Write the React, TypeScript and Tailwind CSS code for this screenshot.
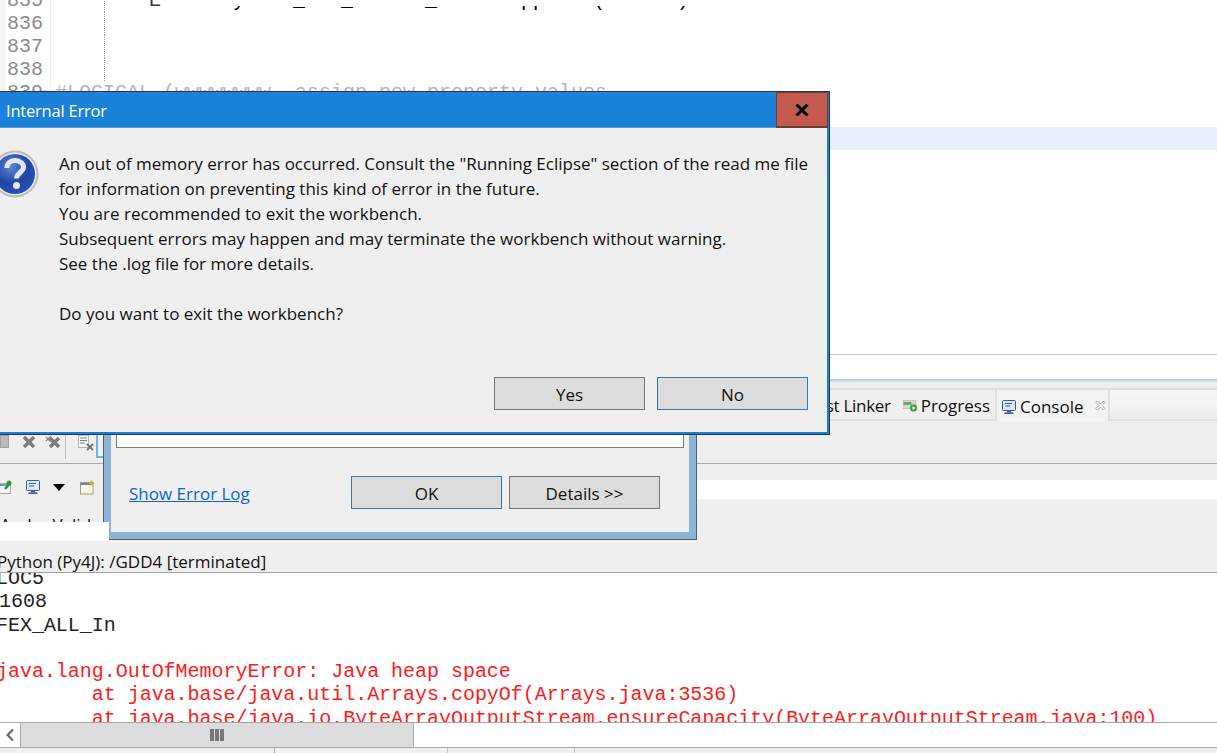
import React from "react";

const codeRows = [
  { n: "835" },
  { n: "836" },
  { n: "837" },
  { n: "838" },
  { n: "839" },
  { n: "840" },
  { n: "841" },
];

function QuestionIcon() {
  return (
    <svg width="48" height="48" viewBox="0 0 48 48">
      <defs>
        <radialGradient id="qb" cx="40%" cy="30%" r="80%">
          <stop offset="0%" stopColor="#5f86d8" />
          <stop offset="55%" stopColor="#1f46a4" />
          <stop offset="100%" stopColor="#2c55c0" />
        </radialGradient>
      </defs>
      <circle cx="24" cy="24" r="23.5" fill="#b9bcc2" />
      <circle cx="24" cy="24" r="21.5" fill="#eeeeee" />
      <circle cx="24" cy="24" r="20" fill="url(#qb)" />
      <path d="M16 18c0-5 4-7.500 8-7.500s8.500 2.500 8.500 6.500c0 5.500-7 5.500-7 11.500" fill="none" stroke="#e4e8f2" strokeWidth="5" />
      <circle cx="25.500" cy="35.500" r="3.500" fill="#e4e8f2" />
    </svg>
  );
}

function MonitorIcon({ size = 14 }: { size?: number }) {
  return (
    <svg width={size} height={size} viewBox="0 0 14 14">
      <rect x="0.500" y="0.500" width="13" height="10" rx="1" fill="#dfe7f2" stroke="#2f5f9e" />
      <path d="M3 3.500h7M3 6h5" stroke="#2f5f9e" strokeWidth="1" />
      <rect x="5" y="11" width="4" height="1.500" fill="#2f5f9e" />
      <rect x="2.500" y="12.500" width="9" height="1.500" fill="#2f5f9e" />
    </svg>
  );
}

function ProgressIcon() {
  return (
    <svg width="14" height="12" viewBox="0 0 14 12">
      <rect x="0" y="0.500" width="13" height="8" fill="#d8d8c8" stroke="#a8a898" strokeWidth="0.500" />
      <rect x="0.500" y="2" width="8" height="3" fill="#5fae5f" />
      <circle cx="10.500" cy="8" r="3.500" fill="#3c9a46" />
      <path d="M9.500 6l3 2-3 2z" fill="#fff" />
    </svg>
  );
}

function CloseTabIcon() {
  return (
    <svg width="11" height="11" viewBox="0 0 11 11">
      <path d="M1 2.500L2.500 1 5.500 4 8.500 1 10 2.500 7 5.500 10 8.500 8.500 10 5.500 7 2.500 10 1 8.500 4 5.500z" fill="#fff" stroke="#8a8a8a" strokeWidth="0.800" />
    </svg>
  );
}

function GrayX({ double }: { double?: boolean }) {
  return (
    <svg width={double ? 16 : 14} height="14" viewBox={double ? "0 0 16 14" : "0 0 14 14"}>
      {double && <path d="M1 2l5 5M6 1L1 6" stroke="#8a8a8a" strokeWidth="1.300" fill="none" />}
      <path d={double ? "M5 3l9 9M14 3l-9 9" : "M2 2l10 10M12 2L2 12"} stroke="#7c7c7c" strokeWidth="3.400" fill="none" />
    </svg>
  );
}

function ClearIcon() {
  return (
    <svg width="16" height="16" viewBox="0 0 16 16">
      <rect x="0.500" y="0.500" width="10" height="12" fill="#f5f5f5" stroke="#b5b5b5" />
      <path d="M2 3h7M2 5.500h7M2 8h5" stroke="#6d86ad" />
      <path d="M9 9l6 6M15 9l-6 6" stroke="#777" strokeWidth="2" />
    </svg>
  );
}

function PinDocIcon() {
  return (
    <svg width="12" height="15" viewBox="0 0 12 15">
      <rect x="-4" y="3.500" width="14.500" height="10" fill="#f4f4f4" stroke="#a9a9a9" />
      <rect x="-4" y="4" width="14" height="2" fill="#6a9bd0" />
      <path d="M5 9l5-6" stroke="#2b8c3a" strokeWidth="2.500" />
      <circle cx="9" cy="3" r="2.500" fill="#2f9a3e" />
    </svg>
  );
}

function NewWindowIcon() {
  return (
    <svg width="15" height="15" viewBox="0 0 15 15">
      <rect x="0.500" y="2.500" width="12.500" height="11.500" fill="#fbf8e8" stroke="#a59a70" />
      <rect x="1" y="3" width="11" height="2" fill="#5c8cc4" />
      <path d="M3 13c5 0 7-3 7-7" stroke="#eadf9e" fill="none" />
      <path d="M11.500 0.500v5M9 3h5" stroke="#d9aa2d" strokeWidth="1.800" />
    </svg>
  );
}

function DialogButton({ label, focused, w = "w-[151px]" }: { label: string; focused?: boolean; w?: string }) {
  return (
    <button
      className={`${w} h-[33px] pt-[2px] bg-[#dcdcdc] border text-[17px] leading-[28px] text-[#111] ${focused ? "border-[#3a78ac]" : "border-[#777777]"}`}
    >
      {label}
    </button>
  );
}

export default function App() {
  return (
    <div className="relative w-[1217px] h-[753px] overflow-hidden flex flex-col bg-white font-['Open_Sans',sans-serif] text-[#111]">
      {/* Editor */}
      <div className="h-[355px] shrink-0 overflow-hidden border-b border-[#c6c6c6] bg-white font-['Liberation_Mono',monospace] text-[20px] leading-[23px]">
        <div className="-mt-[11px]">
          {codeRows.map((r, i) => (
            <div key={r.n} className={`flex h-[23px] ${i === 6 ? "bg-[#e6f0fc]" : ""}`}>
              <div className="w-[6px] bg-[#f6f6f6] shrink-0" />
              <div className="w-[45px] shrink-0 border-r border-[#f0f0f0] pl-px text-[#8c8c8c] bg-white">{r.n}</div>
              <div className={`w-[54px] shrink-0 ${i < 4 ? "border-r border-dotted border-[#9a9a9a]" : ""}`} />
              {i === 0 && (
                <div className="relative flex-1 overflow-hidden">
                  <div className="absolute left-[44px] top-0 h-[17px] overflow-hidden whitespace-pre text-[#333]">E</div>
                  <div className="absolute left-[44px] top-[17px] h-[6px] overflow-hidden">
                    <div className="-mt-[17px] whitespace-pre text-black">{"E      y    _   _      _       pp    (      )"}</div>
                  </div>
                </div>
              )}
              {i === 4 && (
                <div className="-ml-[64px] flex items-start whitespace-pre text-[#b4b4b4]">
                  <span className="mt-[9px] mr-[7px] w-[7px] h-[7px] rounded-full border border-[#b4b4b4]" />
                  #LOGICAL (wwwwwwww, assign new property values
                </div>
              )}
            </div>
          ))}
        </div>
      </div>

      <div className="h-[24px] shrink-0 bg-white" />
      <div className="h-[3px] shrink-0 bg-gradient-to-b from-[#b9c7d3] to-[#e2e4e6]" />

      {/* Tab strip + toolbar */}
      <div className="h-[82px] shrink-0 bg-[#efefef] border-b border-[#a9a9a9] pt-[6px] flex flex-col">
        <div className="flex h-[33px] shrink-0 text-[17px]">
          <div className="w-[995px] border-y-2 border-[#e0e0e0] flex justify-end items-center gap-[12px] pr-[5px] pt-[3px]">
            <span className="tracking-[-0.3px]">Host Linker</span>
            <span className="flex items-center gap-[4px]">
              <ProgressIcon />
              Progress
            </span>
          </div>
          <div className="w-[115px] border-x-2 border-t-2 border-[#e0e0e0] bg-[#f3f3f3] flex items-center pl-[5px] gap-[4px] pt-[2px]">
            <MonitorIcon />
            <span>Console</span>
            <span className="ml-[7px] -mt-[3px]">
              <CloseTabIcon />
            </span>
          </div>
          <div className="flex-1 border-y-2 border-[#e0e0e0] bg-gradient-to-b from-[#f6f6f6] to-[#efefef]" />
        </div>
        <div className="flex-1 flex items-start pt-[14px] pl-0 gap-[13px]">
          <span className="w-[9px] h-[13px] bg-[#b9b9b9] border border-[#a0a0a0]" />
          <GrayX />
          <span className="-ml-[4px]">
            <GrayX double />
          </span>
          <span className="-ml-[9px] w-px h-[26px] -mt-[2px] bg-[#bdbdbd]" />
          <span className="-ml-[1px]">
            <ClearIcon />
          </span>
          <span className="-ml-[11px] w-[8px] h-[25px] -mt-[2px] border-2 border-r-0 border-t-0 border-[#6cb6ea]" />
        </div>
      </div>

      {/* Second toolbar */}
      <div className="h-[109px] shrink-0 bg-[#efefef] border-b border-[#a3a3a3] pt-[16px] flex flex-col">
        <div className="flex h-[19px] shrink-0">
          <div className="w-[696px] shrink-0 flex items-start gap-[14px]">
            <PinDocIcon />
            <MonitorIcon />
            <svg width="12" height="7" viewBox="0 0 12 7" className="mt-[4px] -ml-[1px]">
              <path d="M0 0h12L6 7z" fill="#000" />
            </svg>
            <span className="ml-[1px]">
              <NewWindowIcon />
            </span>
          </div>
          <div className="flex-1 bg-white" />
        </div>
        <div className="h-[19px] shrink-0 mt-[14px] overflow-hidden text-[17px] leading-[24px] pl-0 whitespace-pre">Ander Valid</div>
        <div className="mt-[20px] shrink-0 text-[17px] leading-[20px] -ml-[3px] whitespace-pre text-[#111]">Python (Py4J): /GDD4 [terminated]</div>
      </div>

      {/* Console */}
      <div className="h-[149px] shrink-0 overflow-hidden bg-white font-['Liberation_Mono',monospace] text-[20px] leading-[23.25px] tracking-[-0.03px] whitespace-pre">
        <div className="-mt-[6px] -ml-[4px]">
          <div className="text-[#222]">LOC5</div>
          <div className="text-[#222] ml-[3px]">1608</div>
          <div className="text-[#222]">FEX_ALL_In</div>
          <div>&nbsp;</div>
          <div className="text-[#ff1a1a]">java.lang.OutOfMemoryError: Java heap space</div>
          <div className="text-[#ff1a1a]">{"\u00a0\u00a0\u00a0\u00a0\u00a0\u00a0\u00a0\u00a0at java.base/java.util.Arrays.copyOf(Arrays.java:3536)"}</div>
          <div className="text-[#ff1a1a]">{"\u00a0\u00a0\u00a0\u00a0\u00a0\u00a0\u00a0\u00a0at java.base/java.io.ByteArrayOutputStream.ensureCapacity(ByteArrayOutputStream.java:100)"}</div>
        </div>
      </div>

      {/* Scrollbar */}
      <div className="h-[26px] shrink-0 flex bg-white border-y border-[#a8a8a8]">
        <div className="w-[20px] flex items-center justify-center bg-white">
          <svg width="10" height="14" viewBox="0 0 10 14">
            <path d="M8 1.500L2.500 7 8 12.500" fill="none" stroke="#606060" strokeWidth="2" />
          </svg>
        </div>
        <div className="w-[394px] bg-[#dcdcdc] border-x border-[#a8a8a8] flex items-center justify-center gap-px">
          <span className="w-[4px] h-[12px] bg-[#777]" />
          <span className="w-[4px] h-[12px] bg-[#777]" />
          <span className="w-[4px] h-[12px] bg-[#777]" />
        </div>
        <div className="flex-1 bg-white" />
      </div>
      <div className="flex-1 bg-[#f0f0f0] flex">
        <div className="w-[275px] border-r border-[#a8a8a8]" />
        <div className="w-[173px] border-r border-[#c4c4c4]" />
        <div className="w-[127px] border-r border-[#c4c4c4]" />
      </div>

      {/* Behind: Error dialog */}
      <div className="absolute left-[103px] top-[400px] w-[594px] h-[140px] border border-[#555e66] border-t-0 bg-[#8ab3d6] pl-[7px] pr-[7px] pb-[7px]">
        <div className="h-full bg-[#efefef] flex flex-col pl-[5px] pr-[5px]">
          <div className="h-[48px] shrink-0 bg-white border border-[#7d7d7d]" />
          <div className="flex items-center mt-[28px] pl-[13px] pr-[24px]">
            <a className="text-[17px] pt-[2px] text-[#0a64c8] underline">Show Error Log</a>
            <div className="ml-auto flex gap-[7px]">
              <DialogButton label="OK" focused />
              <DialogButton label="Details >>" />
            </div>
          </div>
        </div>
      </div>
      <div className="absolute left-0 top-[522px] w-[109px] h-[19px] bg-white" />

      {/* Front: Internal Error dialog */}
      <div className="absolute left-[-40px] top-[91px] w-[870px] h-[344px] border border-[#26394b] flex flex-col">
        <div className="flex-1 flex flex-col border-x-2 border-b-2 border-[#1a7fd6] bg-[#efefef]">
          <div className="h-[36px] shrink-0 bg-[#1a82d9] border-b border-[#5b9ed6] flex">
            <div className="pl-[43px] pt-[7px] text-[16.5px] leading-[24px] tracking-[-0.2px] text-white">Internal Error</div>
            <div className="ml-auto -mr-px w-[52px] h-[36px] bg-[#c25a4f] border border-[#6f3a35] border-b-2 flex items-center justify-center">
              <svg width="14" height="12" viewBox="0 0 14 12">
                <path d="M1.500 0.500L12.500 11.500M12.500 0.500L1.500 11.500" stroke="#000" strokeWidth="3" fill="none" />
              </svg>
            </div>
          </div>
          <div className="flex pt-[22px] pl-[28px]">
            <div className="w-[66px] shrink-0">
              <QuestionIcon />
            </div>
            <div className="text-[17px] leading-[25px] mt-[1px] pl-[2px] whitespace-pre">
              <div>An out of memory error has occurred. Consult the "Running Eclipse" section of the read me file</div>
              <div>for information on preventing this kind of error in the future.</div>
              <div>You are recommended to exit the workbench.</div>
              <div>Subsequent errors may happen and may terminate the workbench without warning.</div>
              <div>See the .log file for more details.</div>
              <div>&nbsp;</div>
              <div>Do you want to exit the workbench?</div>
            </div>
          </div>
          <div className="mt-auto mb-[22px] flex justify-end gap-[12px] pr-[19px]">
            <DialogButton label="Yes" />
            <DialogButton label="No" focused />
          </div>
        </div>
      </div>
    </div>
  );
}
